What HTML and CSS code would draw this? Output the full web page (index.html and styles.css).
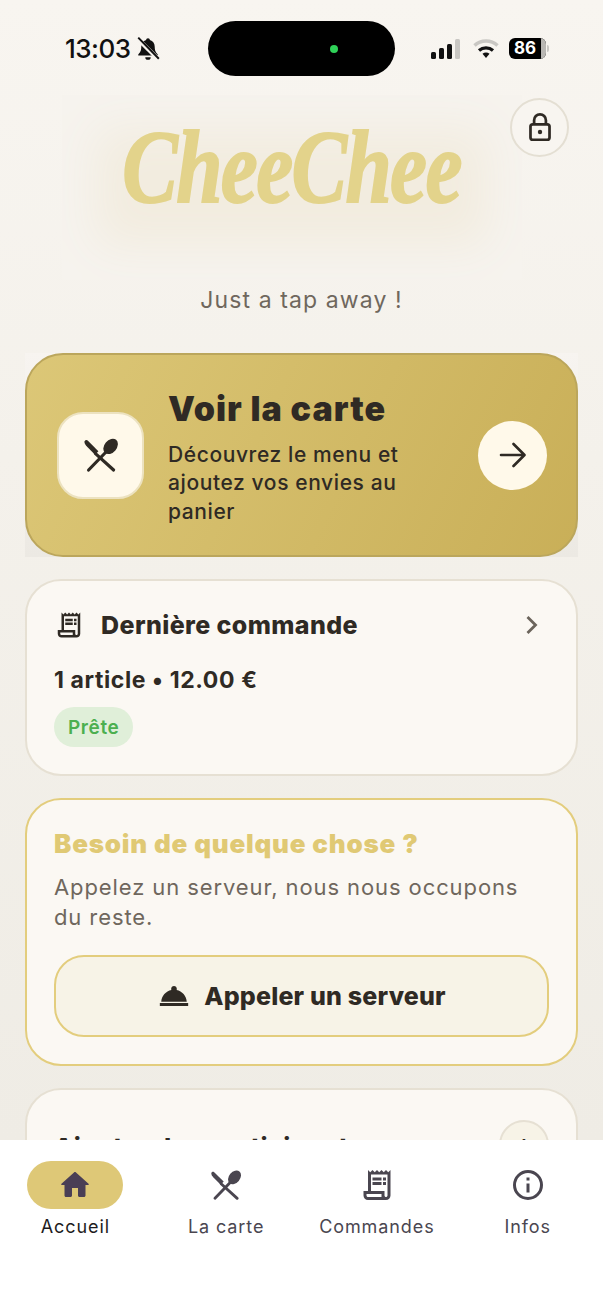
FILE: index.html
```html
<!DOCTYPE html>
<html lang="fr">
	<head>
		<meta charset="utf-8">
		<meta name="viewport" content="width=device-width">
		<title>CheeChee</title>
		<link rel="stylesheet" href="styles.css">
	</head>
	<body>
		<svg class="sprite" width="0" height="0" aria-hidden="true">
			<symbol id="ic-couverts" viewBox="0 0 36 36">
				<path fill="currentColor" d="M1.500 4.600C2 3 3.600 2.600 4.700 3.600L15.400 14.200 12 17.700 3.900 9.600C2.400 8 1.200 6.200 1.500 4.600Z"/>
				<path d="M12.500 16.600 30.600 33" fill="none" stroke="currentColor" stroke-width="3.200" stroke-linecap="round"/>
				<ellipse fill="currentColor" cx="27.600" cy="9.400" rx="6.200" ry="8.600" transform="rotate(40 27.600 9.400)"/>
				<path d="M23 15 5.600 33" fill="none" stroke="currentColor" stroke-width="3.200" stroke-linecap="round"/>
			</symbol>
			<symbol id="ic-recu" viewBox="0 0 24 24">
				<path fill="currentColor" d="M19.500 3.500 18 2l-1.500 1.500L15 2l-1.500 1.500L12 2l-1.500 1.500L9 2 7.500 3.500 6 2v14H3v3c0 1.660 1.340 3 3 3h12c1.660 0 3-1.340 3-3V2l-1.500 1.500zM15 20H6c-.55 0-1-.45-1-1v-1h10v2zm4-1c0 .55-.45 1-1 1s-1-.45-1-1v-3H8V5h11v14z"/>
				<path fill="currentColor" d="M9 7h6v2H9zm7 0h2v2h-2zm-7 3h6v2H9zm7 0h2v2h-2z"/>
			</symbol>
			<symbol id="ic-maison" viewBox="0 0 24 24">
				<path fill="currentColor" d="M10 19v-5h4v5c0 .55.45 1 1 1h3c.55 0 1-.45 1-1v-7h1.700c.46 0 .68-.57.33-.87L12.670 3.600c-.38-.34-.96-.34-1.340 0l-8.360 7.530c-.34.3-.13.87.33.87H5v7c0 .55.45 1 1 1h3c.55 0 1-.45 1-1z"/>
			</symbol>
			<symbol id="ic-info" viewBox="0 0 24 24">
				<path fill="currentColor" d="M11 7h2v2h-2zm0 4h2v6h-2z"/>
				<path fill="currentColor" d="M12 2a10 10 0 1 0 0 20 10 10 0 0 0 0-20zm0 18a8 8 0 1 1 0-16 8 8 0 0 1 0 16z"/>
			</symbol>
		</svg>

		<div class="app">
			<div class="contenu">
				<div class="statut">
					<div class="statut-gauche">
						<span class="heure">13:03</span>
						<svg class="cloche" width="26" height="26" viewBox="0 0 24 24">
							<path fill="#111" d="M12 2c-1 0-1.700.7-1.700 1.600C7.300 4.400 5.800 7 5.800 10c0 4-1.300 5.600-2.800 7v1h18v-1c-1.500-1.400-2.800-3-2.800-7 0-3-1.500-5.600-4.500-6.400C13.700 2.700 13 2 12 2zM9.500 19.500a2.500 2.500 0 0 0 5 0z"/>
							<path d="M2.500 2.500 21.500 21.500" stroke="#f7f4ef" stroke-width="4"/>
							<path d="M3 1.500 22 21" stroke="#111" stroke-width="1.800"/>
						</svg>
					</div>
					<div class="ilot"><span class="point-vert"></span></div>
					<div class="statut-droite">
						<svg class="reseau" width="30" height="20" viewBox="0 0 30 20">
							<rect x="0" y="13" width="5" height="7" rx="1.500" fill="#111"/>
							<rect x="8" y="9" width="5" height="11" rx="1.500" fill="#111"/>
							<rect x="16" y="5" width="5" height="15" rx="1.500" fill="#111"/>
							<rect x="24" y="0" width="5" height="20" rx="1.500" fill="#c9c7c3"/>
						</svg>
						<svg class="wifi" width="26" height="20" viewBox="0 0 26 20">
							<path d="M1.500 6.500C8 .5 18 .5 24.500 6.500" fill="none" stroke="#c9c7c3" stroke-width="3.500"/>
							<path d="M6 11.500c4-3.600 10-3.600 14 0" fill="none" stroke="#111" stroke-width="3.200"/>
							<path d="M9.500 14.800c2.100-1.700 4.900-1.700 7 0L13 19z" fill="#111"/>
						</svg>
						<div class="batterie"><span class="batterie-niveau">86</span><span class="batterie-reste"></span></div>
						<span class="batterie-bout"></span>
					</div>
				</div>

				<header class="entete">
					<button class="verrou" aria-label="Verrouiller">
						<svg width="24" height="29" viewBox="0 0 26 32" fill="none" stroke="#2f2a24" stroke-width="3">
							<rect x="2.500" y="12.500" width="21" height="17" rx="2.500"/>
							<path d="M6.500 12.500V8a6.500 6.500 0 0 1 13 0v4.500"/>
							<circle cx="13" cy="21" r="2.400" fill="#2f2a24" stroke="none"/>
						</svg>
					</button>
					<div class="logo-zone">
						<h1 class="logo">CheeChee</h1>
					</div>
					<p class="slogan">Just a tap away !</p>
				</header>

				<div class="carte-fond">
					<section class="carte-menu">
						<div class="menu-icone"><svg width="36" height="36"><use href="#ic-couverts"/></svg></div>
						<div class="menu-texte">
							<h2>Voir la carte</h2>
							<p>Découvrez le menu et ajoutez vos envies au panier</p>
						</div>
						<div class="menu-fleche">
							<svg width="28" height="26" viewBox="0 0 28 26" fill="none" stroke="#2f2a24" stroke-width="2.600" stroke-linecap="round" stroke-linejoin="round">
								<path d="M2 13H25M14.500 2 25.500 13 14.500 24"/>
							</svg>
						</div>
					</section>
				</div>

				<section class="bloc">
					<div class="bloc-titre">
						<svg width="30" height="30"><use href="#ic-recu"/></svg>
						<h3>Dernière commande</h3>
						<svg class="chevron" width="14" height="20" viewBox="0 0 14 20" fill="none" stroke="#6b645b" stroke-width="2.800">
							<path d="M2.500 2 10.500 10 2.500 18"/>
						</svg>
					</div>
					<p class="resume">1 article • 12.00 €</p>
					<span class="etat">Prête</span>
				</section>

				<section class="bloc bloc-aide">
					<h3>Besoin de quelque chose ?</h3>
					<p>Appelez un serveur, nous nous occupons du reste.</p>
					<button class="appel">
						<svg width="34" height="34" viewBox="0 0 24 24"><path fill="currentColor" d="M2 17h20v2H2zm11.840-9.210c.1-.24.16-.51.16-.79 0-1.100-.9-2-2-2s-2 .9-2 2c0 .28.06.55.16.79C6.250 8.600 3.270 11.930 3 16h18c-.27-4.070-3.250-7.400-7.160-8.210z"/></svg>
						Appeler un serveur
					</button>
				</section>

				<section class="bloc bloc-participants">
					<h3>Ajouter des participants</h3>
					<span class="ajout">+</span>
				</section>
			</div>

			<nav class="onglets">
				<a class="onglet actif">
					<span class="pastille"><svg width="36" height="36"><use href="#ic-maison"/></svg></span>
					Accueil
				</a>
				<a class="onglet">
					<span class="pastille"><svg width="32" height="32"><use href="#ic-couverts"/></svg></span>
					La carte
				</a>
				<a class="onglet">
					<span class="pastille"><svg width="36" height="36"><use href="#ic-recu"/></svg></span>
					Commandes
				</a>
				<a class="onglet">
					<span class="pastille"><svg width="36" height="36"><use href="#ic-info"/></svg></span>
					Infos
				</a>
			</nav>
		</div>
	</body>
</html>
```

FILE: styles.css
```css
* {
	box-sizing: border-box;
}

html, body {
	margin: 0;
	height: 100%;
}

body {
	font-family: Inter, "Noto Sans", sans-serif;
	color: #2f2a24;
	background-color: #f3f0ea;
}

h1, h2, h3, p {
	margin: 0;
}

button {
	font-family: inherit;
	color: inherit;
}

.sprite {
	position: absolute;
}

svg {
	display: block;
}

.app {
	display: flex;
	flex-direction: column;
	height: 1311px;
	overflow: hidden;
}

.contenu {
	flex: 1;
	min-height: 0;
	overflow: hidden;
	padding: 21px 25px 0;
	background: linear-gradient(180deg, #f8f5f0 0%, #f4f1eb 40%, #efece5 100%);
}

/* barre de statut */

.statut {
	display: flex;
	align-items: center;
	height: 55px;
	margin: 0 -25px;
}

.statut-gauche, .statut-droite {
	display: flex;
	align-items: center;
}

.statut-gauche {
	flex: none;
	width: 208px;
	padding-left: 65px;
}

.statut-droite {
	flex: 1;
	justify-content: flex-end;
	padding-right: 54px;
}

.heure {
	font-size: 26px;
	font-weight: 500;
	color: #111;
	letter-spacing: -0.5px;
}

.cloche {
	margin-left: 4px;
}

.ilot {
	flex: none;
	display: flex;
	align-items: center;
	justify-content: flex-end;
	width: 187px;
	height: 55px;
	padding-right: 57px;
	background-color: #000;
	border-radius: 28px;
}

.point-vert {
	width: 8px;
	height: 8px;
	background-color: #2fd158;
	border-radius: 50%;
}

.wifi {
	margin: 0 10px 0 12px;
}

.batterie {
	display: flex;
	width: 37px;
	height: 21px;
	overflow: hidden;
	background-color: #000;
	border-radius: 6px;
}

.batterie-niveau {
	flex: 1;
	font-size: 17px;
	font-weight: 700;
	line-height: 21px;
	text-align: center;
	color: #fff;
}

.batterie-reste {
	width: 5px;
	background-color: #b9b7b3;
}

.batterie-bout {
	width: 2px;
	height: 7px;
	margin-left: 1px;
	background-color: #c9c7c3;
	border-radius: 0 2px 2px 0;
}

/* entete */

.entete {
	position: relative;
	display: flex;
	flex-direction: column;
	align-items: center;
	height: 277px;
}

.verrou {
	position: absolute;
	top: 22px;
	right: 9px;
	display: flex;
	align-items: center;
	justify-content: center;
	width: 59px;
	height: 59px;
	padding: 0;
	background-color: #f8f5f0;
	border: 2px solid #e4dfd3;
	border-radius: 50%;
}

.logo-zone {
	display: flex;
	justify-content: center;
	width: 460px;
	height: 185px;
	margin-top: 19px;
	margin-left: -20px;
	padding-top: 14px;
	background-color: #f2ecdf;
	box-shadow: inset 0 0 45px 35px #f6f3ee;
}

.logo {
	font-family: "Liberation Serif", serif;
	font-size: 104px;
	font-style: italic;
	font-weight: 700;
	line-height: 116px;
	letter-spacing: -2px;
	color: #e3d38b;
	-webkit-text-stroke: 2px #e3d38b;
	transform: scaleX(0.8);
}

.slogan {
	margin-top: 5px;
	font-size: 23px;
	line-height: 30px;
	letter-spacing: 1.1px;
	color: #6f675d;
}

/* carte principale */

.carte-fond {
	background: linear-gradient(180deg, #f7f4f0, #ece9e3);
}

.carte-menu {
	display: flex;
	align-items: center;
	gap: 24px;
	height: 204px;
	padding: 0 29px 0 30px;
	background: linear-gradient(115deg, #dcc777 0%, #c9af58 100%);
	border: 2px solid #bba65c;
	border-radius: 38px;
}

.menu-icone {
	flex: none;
	display: flex;
	align-items: center;
	justify-content: center;
	width: 87px;
	height: 87px;
	background-color: #fff9ea;
	border: 2px solid #ece2c0;
	border-radius: 26px;
}

.menu-texte {
	flex: 1;
	min-width: 0;
	padding-top: 5px;
}

.menu-texte h2 {
	font-size: 34px;
	font-weight: 900;
	line-height: 40px;
	letter-spacing: 1px;
}

.menu-texte p {
	margin-top: 12px;
	font-size: 21px;
	font-weight: 500;
	line-height: 28.500px;
	letter-spacing: 0.6px;
}

.menu-fleche {
	flex: none;
	display: flex;
	align-items: center;
	justify-content: center;
	width: 69px;
	height: 69px;
	background-color: #fff9ea;
	border-radius: 50%;
}

/* blocs */

.bloc {
	margin-top: 22px;
	padding: 27px;
	background-color: #fbf8f3;
	border: 2px solid #e6e0d3;
	border-radius: 36px;
}

.bloc h3 {
	font-size: 25px;
	font-weight: 800;
	line-height: 34px;
	letter-spacing: 0.4px;
}

.bloc-titre {
	display: flex;
	align-items: center;
	gap: 17px;
	height: 34px;
}

.bloc-titre h3 {
	flex: 1;
}

.chevron {
	margin-right: 10px;
}

.resume {
	margin-top: 23px;
	font-size: 23px;
	font-weight: 700;
	line-height: 30px;
	letter-spacing: 0.6px;
}

.etat {
	display: block;
	width: fit-content;
	margin-top: 12px;
	padding: 1px 14px 0;
	font-size: 19px;
	font-weight: 600;
	line-height: 39px;
	letter-spacing: 0.6px;
	color: #4caf50;
	background-color: #e0efd9;
	border-radius: 21px;
}

.bloc-aide {
	border-color: #e3cd7d;
}

.bloc-aide h3 {
	font-size: 26px;
	font-weight: 900;
	letter-spacing: 0.8px;
	color: #e0c974;
}

.bloc-aide p {
	margin-top: 11px;
	font-size: 22px;
	line-height: 30px;
	letter-spacing: 0.9px;
	color: #6f675d;
}

.appel {
	display: flex;
	align-items: center;
	justify-content: center;
	gap: 13px;
	width: 100%;
	height: 82px;
	margin-top: 23px;
	font-size: 25px;
	font-weight: 800;
	letter-spacing: 0.2px;
	background-color: #f7f3e7;
	border: 2px solid #e3cd7d;
	border-radius: 30px;
}

.bloc-participants {
	position: relative;
	height: 120px;
	padding-top: 40px;
}

.ajout {
	position: absolute;
	top: 30px;
	right: 27px;
	width: 50px;
	height: 50px;
	font-size: 30px;
	line-height: 44px;
	text-align: center;
	background-color: #f7f3e7;
	border: 2px solid #e6e0d3;
	border-radius: 50%;
}

/* barre du bas */

.onglets {
	flex: none;
	display: grid;
	grid-template-columns: repeat(4, 1fr);
	height: 171px;
	padding: 21px 0 0;
	background-color: #fff;
}

.onglet {
	display: flex;
	flex-direction: column;
	align-items: center;
	gap: 6px;
	font-size: 18px;
	line-height: 24px;
	letter-spacing: 0.9px;
	color: #4a4650;
}

.onglet.actif {
	color: #1d1b20;
}

.pastille {
	display: flex;
	align-items: center;
	justify-content: center;
	width: 96px;
	height: 48px;
	border-radius: 24px;
}

.actif .pastille {
	color: #4a3f55;
	background-color: #dec877;
}
```
